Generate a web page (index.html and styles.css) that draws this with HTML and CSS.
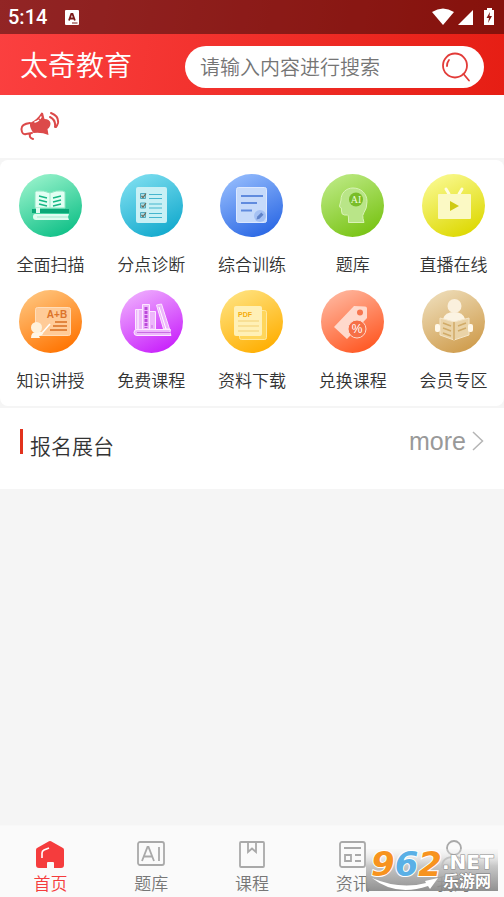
FILE: index.html
```html
<!DOCTYPE html>
<html lang="zh-CN">
<head>
    <meta charset="UTF-8">
    <meta name="viewport" content="width=device-width, initial-scale=1.0">
    <title>太奇教育</title>
    <link rel="stylesheet" href="styles.css">
</head>
<body>
    <div class="top">
        <div class="status">
            <span class="time">5:14</span>
            <svg class="status-app" width="14" height="15" viewBox="0 0 14 15">
                <rect width="14" height="15" rx="1" fill="#fff"/>
                <path d="M4 10.500 6.300 4h1.200l2.400 6.500M5 8.500h4" fill="none" stroke="#7b1a1a" stroke-width="1.800"/>
                <path d="M7 13h5.500" stroke="#7b1a1a"/>
            </svg>
            <svg class="status-icons" width="64" height="20" viewBox="0 0 64 20" fill="#fff">
                <path d="M0 5Q11-2 22 5L11 18z"/>
                <path d="M41 3v15H26z"/>
                <path d="M55 1h5v2h2v15h-10V3h3z"/>
                <path d="M58 5 54.500 11h2.500l-1 5 4-7h-2.500z" fill="#7d1611"/>
            </svg>
        </div>
        <header class="header">
            <h1>太奇教育</h1>
            <form class="search">
                <input type="search" placeholder="请输入内容进行搜索" aria-label="搜索">
                <button type="submit" aria-label="搜索">
                    <svg width="30" height="30" viewBox="0 0 30 30" fill="none" stroke="#e23b38" stroke-width="1.800" stroke-linecap="round">
                        <circle cx="14" cy="13.500" r="12"/>
                        <path d="M22.500 22 28 28.500M6 14q0-3.500 2-6"/>
                    </svg>
                </button>
            </form>
        </header>
    </div>

    <main>
        <div class="notice">
            <svg width="40" height="30" viewBox="0 0 40 30" fill="none" stroke="#dc4a4a" stroke-width="2" stroke-linecap="round">
                <path d="M10 12Q17 9 21.500 1.500l1.500.500 1.500 6q5 0 6 4 0 4-3 6l1 6q-7-3-15-2-4-5-3.500-10z" fill="#dc4a4a" stroke="none"/>
                <path d="M10 12Q1 13 1.500 18.500T6 23l6-1M10 23q-1 4 3 5"/>
                <path d="M15 11q4-1 6-5" stroke="#fff" stroke-width="1.500" stroke-dasharray="4 2.500"/>
                <path d="M30 6q6 3 5 10M31 2q8 3 7 10-1 3-2 4"/>
            </svg>
        </div>

        <nav class="menu">
            <a href="#">
                <svg class="circle" viewBox="0 0 63 63">
                    <defs><linearGradient id="g1" x1="0.200" y1="0" x2="0.700" y2="1"><stop stop-color="#9af3cc"/><stop offset="1" stop-color="#0fc087"/></linearGradient></defs>
                    <circle cx="31.500" cy="31.500" r="31.500" fill="url(#g1)"/>
                    <path d="M17 17q8-1 14 2 6-3 13-2l2 1v16H16V18z" fill="#e2fff3" stroke="#8be5c2"/>
                    <path d="M20 22l8 2M20 26l8 2M20 30l8 2M34 24l8-2M34 28l8-2M34 32l8-2" stroke="#15b884" stroke-width="1.300"/>
                    <path d="M31 19v15" stroke="#a5e8cd"/>
                    <path d="M13 35h37v4H13z" fill="#0aa877"/>
                    <path d="M17 34h4v5h-4zM15 40h35l-1 3 1 3H17q-3 0-3-3t2-3z" fill="#dffcf0"/>
                    <path d="M18 43h31" stroke="#a0e9cc"/>
                </svg>
                <span>全面扫描</span>
            </a>
            <a href="#">
                <svg class="circle" viewBox="0 0 63 63">
                    <defs><linearGradient id="g2" x1="0.200" y1="0" x2="0.700" y2="1"><stop stop-color="#7fdff0"/><stop offset="1" stop-color="#12a9cd"/></linearGradient></defs>
                    <circle cx="31.500" cy="31.500" r="31.500" fill="url(#g2)"/>
                    <rect x="16" y="13" width="31" height="36" rx="2" fill="#c8f0f5"/>
                    <path d="M20.500 19.500h5v5h-5zM20.500 29h5v5h-5zM20.500 38.500h5v5h-5z" fill="#a9dce3" stroke="#4ea9bd"/>
                    <path d="m21.500 22 1.500 1.500 3-4M21.500 31.500 23 33l3-4M21.500 41l1.500 1.500 3-4" fill="none" stroke="#6d6a58" stroke-width="1.200"/>
                    <path d="M29 20.500h13M29 24.500h13M29 30h13M29 34h13M29 39.500h13M29 43.500h13" stroke="#45b5ce" stroke-width="1.200"/>
                </svg>
                <span>分点诊断</span>
            </a>
            <a href="#">
                <svg class="circle" viewBox="0 0 63 63">
                    <defs><linearGradient id="g3" x1="0.200" y1="0" x2="0.700" y2="1"><stop stop-color="#96bdfd"/><stop offset="1" stop-color="#2a67e4"/></linearGradient></defs>
                    <circle cx="31.500" cy="31.500" r="31.500" fill="url(#g3)"/>
                    <rect x="16.500" y="13.500" width="30" height="35" rx="2" fill="#c6dafa" stroke="#dce8ff"/>
                    <path d="M21 22h22M21 29h16M21 36.500h11" stroke="#608bde" stroke-width="2"/>
                    <circle cx="40" cy="42" r="6" fill="#a5c1f3"/>
                    <path d="m36.500 45.500.800-3 4-4 2.200 2.200-4 4z" fill="#5f82c8"/>
                </svg>
                <span>综合训练</span>
            </a>
            <a href="#">
                <svg class="circle" viewBox="0 0 63 63">
                    <defs><linearGradient id="g4" x1="0.200" y1="0" x2="0.700" y2="1"><stop stop-color="#bdea85"/><stop offset="1" stop-color="#78c313"/></linearGradient></defs>
                    <circle cx="31.500" cy="31.500" r="31.500" fill="url(#g4)"/>
                    <path d="M32 14c-7 0-12 5-12 12l-1.500 6q0 2 2 2v3q0 4 3 4h3q1 0 1 3v4.500h15.500l-1-4q-1-3 1-6 3-4 3-11c0-8-6-13.500-14-13.500z" fill="#b9e588" stroke="#d9f3b6"/>
                    <circle cx="35" cy="25.500" r="7" fill="#79bd28"/>
                    <text x="35" y="28.500" class="ai-text">AI</text>
                </svg>
                <span>题库</span>
            </a>
            <a href="#">
                <svg class="circle" viewBox="0 0 63 63">
                    <defs><linearGradient id="g5" x1="0.200" y1="0" x2="0.700" y2="1"><stop stop-color="#fafa92"/><stop offset="1" stop-color="#ddd800"/></linearGradient></defs>
                    <circle cx="31.500" cy="31.500" r="31.500" fill="url(#g5)"/>
                    <path d="m24 15 3 5M40 15l-3 5" stroke="#fffde2" stroke-width="3" stroke-linecap="round"/>
                    <rect x="16" y="20" width="33" height="25" rx="1" fill="#fbf9c4"/>
                    <path d="m28 27 9 5-9 5z" fill="#cfca13"/>
                </svg>
                <span>直播在线</span>
            </a>
            <a href="#">
                <svg class="circle" viewBox="0 0 63 63">
                    <defs><linearGradient id="g6" x1="0.200" y1="0" x2="0.700" y2="1"><stop stop-color="#ffc67f"/><stop offset="1" stop-color="#ff7300"/></linearGradient></defs>
                    <circle cx="31.500" cy="31.500" r="31.500" fill="url(#g6)"/>
                    <rect x="16.500" y="17.500" width="35" height="28" rx="2" fill="#ffcb98" stroke="#ffddba"/>
                    <text x="38" y="28" class="ab-text">A+B</text>
                    <path d="M36 32h12M34 36h14M31 40h17" stroke="#d96f20" stroke-width="1.500"/>
                    <path d="m23 43 8-9" stroke="#fff" stroke-width="1.500"/>
                    <path d="M12 48q0-6 5-6h7q1 3-4 4l1 2z" fill="#fff6e6"/>
                    <circle cx="17.500" cy="37.500" r="5.500" fill="#fff1da"/>
                </svg>
                <span>知识讲授</span>
            </a>
            <a href="#">
                <svg class="circle" viewBox="0 0 63 63">
                    <defs><linearGradient id="g7" x1="0.200" y1="0" x2="0.700" y2="1"><stop stop-color="#efaffe"/><stop offset="1" stop-color="#c820fb"/></linearGradient></defs>
                    <circle cx="31.500" cy="31.500" r="31.500" fill="url(#g7)"/>
                    <g fill="#edb6fb" stroke="#fce8ff">
                        <path d="M15.500 19.500h7v20h-7zM22.500 14.500h7v25h-7zM29.500 21.500h6v18h-6zM36.500 15l5-1 8 25h-6z"/>
                        <path d="M50.500 39.500H17q-3 0-3 3t3 3h34q-2-3-.500-6z"/>
                    </g>
                    <path d="M26 17v21" stroke="#bb49da" stroke-width="3" stroke-dasharray="3 1"/>
                    <path d="M32 35v3M17 42.500h33" stroke="#c96ce3"/>
                    <path d="m39 17 7 22M18 20v19" stroke="#fff"/>
                </svg>
                <span>免费课程</span>
            </a>
            <a href="#">
                <svg class="circle" viewBox="0 0 63 63">
                    <defs><linearGradient id="g8" x1="0.200" y1="0" x2="0.700" y2="1"><stop stop-color="#ffe381"/><stop offset="1" stop-color="#ffae00"/></linearGradient></defs>
                    <circle cx="31.500" cy="31.500" r="31.500" fill="url(#g8)"/>
                    <rect x="19.500" y="20.500" width="27" height="29" rx="2" fill="#ffd65b" stroke="#ffe89e"/>
                    <rect x="14" y="16" width="28" height="30" rx="2" fill="#fff0b6"/>
                    <text x="18" y="27" class="pdf-text">PDF</text>
                    <path d="M18 31h21M18 36h21M18 41h21" stroke="#f2cf72"/>
                </svg>
                <span>资料下载</span>
            </a>
            <a href="#">
                <svg class="circle" viewBox="0 0 63 63">
                    <defs><linearGradient id="g9" x1="0.200" y1="0" x2="0.700" y2="1"><stop stop-color="#ffb8a0"/><stop offset="1" stop-color="#ff5722"/></linearGradient></defs>
                    <circle cx="31.500" cy="31.500" r="31.500" fill="url(#g9)"/>
                    <path d="m33 16 11 .500q2 0 2 2V28L26 49 13 37z" fill="#ffd9cc"/>
                    <circle cx="39" cy="22.500" r="3" fill="#f77650"/>
                    <circle cx="36" cy="39" r="9" fill="#f66f46" stroke="#ffd9cc"/>
                    <text x="36" y="43" class="percent-text">%</text>
                </svg>
                <span>兑换课程</span>
            </a>
            <a href="#">
                <svg class="circle" viewBox="0 0 63 63">
                    <defs><linearGradient id="g10" x1="0.200" y1="0" x2="0.700" y2="1"><stop stop-color="#eeddb9"/><stop offset="1" stop-color="#cf9c4c"/></linearGradient></defs>
                    <circle cx="31.500" cy="31.500" r="31.500" fill="url(#g10)"/>
                    <path d="M21 29q2-7 11-7t11 7l-11 3z" fill="#fbf3e2"/>
                    <circle cx="32.500" cy="16" r="7" fill="#faf0dd"/>
                    <path d="m18 28 14 4 15-4v17l-15 5-14-5z" fill="#ead3a7" stroke="#f5e6c9"/>
                    <path d="M32 32v18M21 33l8 3M21 38l8 3M36 36l8-3M36 41l8-3M21 43l8 3" stroke="#d1ab68" stroke-width="1.500"/>
                    <rect x="13" y="34" width="5" height="8" rx="2" fill="#fff8e9"/>
                    <rect x="46" y="34" width="5" height="8" rx="2" fill="#fff8e9"/>
                </svg>
                <span>会员专区</span>
            </a>
        </nav>

        <section class="booth">
            <h2>报名展台</h2>
            <a class="more" href="#">more
                <svg width="12" height="20" viewBox="0 0 12 20" fill="none" stroke="#b5b5b5" stroke-width="1.500"><path d="m1 1 9.500 9L1 19"/></svg>
            </a>
        </section>
    </main>

    <footer class="tabbar">
        <a class="active" href="#">
            <svg class="tab-icon" viewBox="0 0 32 32">
                <path d="M15 3.300q1-.600 2 0l12 6.700q1 .600 1 2v15q0 3-3 3h-7v-5q0-1-1-1h-5q-1 0-1 1v5H5q-3 0-3-3V12q0-1.400 1-2z" fill="#f53c3d"/>
                <path d="M8 20v-5q0-2 2-3l5-2" fill="none" stroke="#fff" stroke-width="1.600"/>
            </svg>
            <span>首页</span>
        </a>
        <a href="#">
            <svg class="tab-icon" viewBox="0 0 32 32" fill="none" stroke="#a9a9a9" stroke-width="1.800">
                <rect x="3" y="4" width="26" height="23" rx="2"/>
                <path d="M7 23 12.500 9h1L19 23M9 18.500h8M24 9v14"/>
            </svg>
            <span>题库</span>
        </a>
        <a href="#">
            <svg class="tab-icon" viewBox="0 0 32 32" fill="none" stroke="#a9a9a9" stroke-width="1.800">
                <rect x="4" y="4" width="24" height="25" rx="1"/>
                <path d="M12 4v10l4-3.500 4 3.500V4"/>
            </svg>
            <span>课程</span>
        </a>
        <a href="#">
            <svg class="tab-icon" viewBox="0 0 32 32" fill="none" stroke="#a9a9a9" stroke-width="1.800">
                <rect x="3" y="4" width="25" height="25" rx="2"/>
                <path d="M7 10h17M8 17h6v6H8zM18 17h6M18 23h6"/>
            </svg>
            <span>资讯</span>
        </a>
        <a href="#">
            <svg class="tab-icon" viewBox="0 0 32 32" fill="none" stroke="#a9a9a9" stroke-width="1.800">
                <circle cx="16" cy="10" r="7"/>
                <path d="M4 29q0-10 12-10t12 10z"/>
            </svg>
            <span>我的</span>
        </a>
        <svg class="watermark" width="132" height="42" viewBox="0 0 132 42">
            <defs>
                <linearGradient id="wm" x1="0" y1="0" x2="0" y2="1"><stop stop-color="#ededed" stop-opacity="0.200"/><stop offset="0.400" stop-color="#c2c2c2" stop-opacity="0.900"/><stop offset="1" stop-color="#858585" stop-opacity="0.900"/></linearGradient>
            </defs>
            <rect width="132" height="42" fill="url(#wm)"/>
            <text x="5" y="27" class="wm-num"><tspan fill="#f7931e">9</tspan><tspan fill="#5ab0e6">6</tspan><tspan fill="#f7931e">2</tspan></text>
            <path d="M6 29Q30 48 62 37l2 3 8-11-13 3 1 2Q34 41 6 29z" fill="#fff"/>
            <text x="76" y="20" class="wm-net">.NET</text>
            <text x="77" y="38" class="wm-cn">乐游网</text>
        </svg>
    </footer>
</body>
</html>
```
FILE: styles.css
```css
* {
    margin: 0;
    padding: 0;
    box-sizing: border-box;
}

body {
    display: flex;
    flex-direction: column;
    min-height: 100vh;
    background-color: #f5f5f5;
    color: #333;
    font-family: "Noto Sans CJK SC", sans-serif;
    font-weight: 350;
}

a {
    color: inherit;
    text-decoration: none;
}

svg {
    display: block;
}

.top {
    background: linear-gradient(100deg, #fb4040, #e61e14);
}

.status {
    display: flex;
    align-items: center;
    height: 34px;
    padding: 0 8px;
    background-color: rgba(0, 0, 0, 0.42);
    color: #fff;
}

.time {
    font: 500 20px/34px Roboto, sans-serif;
}

.status-app {
    margin-left: 18px;
}

.status-icons {
    margin-left: auto;
}

.header {
    display: flex;
    align-items: center;
    gap: 53px;
    padding: 12px 20px 7px;
}

h1 {
    color: #fff;
    font-size: 28px;
    font-weight: 350;
    line-height: 34px;
    padding-bottom: 6px;
}

.search {
    flex: 1;
    display: flex;
    align-items: center;
    min-width: 0;
    height: 42px;
    padding: 0 13px 0 15px;
    border-radius: 21px;
    background-color: #fff;
}

.search input {
    flex: 1;
    min-width: 0;
    border: none;
    outline: none;
    background: none;
    font: 350 20px/30px "Noto Sans CJK SC", sans-serif;
}

.search input::placeholder {
    color: #757575;
}

.search button {
    border: none;
    background: none;
    cursor: pointer;
}

.notice {
    height: 63px;
    padding: 16px 20px;
    background-color: #fff;
}

.menu {
    display: grid;
    grid-template-columns: repeat(5, 1fr);
    row-gap: 14px;
    margin: 2px 0;
    padding: 14px 0;
    border-radius: 8px;
    background-color: #fff;
}

.menu a {
    display: flex;
    flex-direction: column;
    align-items: center;
    gap: 15px;
    font-size: 17px;
    line-height: 24px;
}

.circle {
    width: 63px;
    height: 63px;
}

.ai-text {
    font: 10px "Liberation Serif", serif;
    fill: #edffd9;
    text-anchor: middle;
}

.ab-text {
    font: bold 10px "Liberation Sans", sans-serif;
    fill: #dc742a;
    text-anchor: middle;
}

.pdf-text {
    font: bold 7px "Liberation Sans", sans-serif;
    fill: #f5ad0e;
}

.percent-text {
    font: 12px "Liberation Sans", sans-serif;
    fill: #fff;
    text-anchor: middle;
}

.booth {
    display: flex;
    align-items: flex-start;
    justify-content: space-between;
    padding: 21px 20px 35px;
    background-color: #fff;
}

h2 {
    height: 25px;
    padding-left: 7px;
    border-left: 3px solid #e2321d;
    font-size: 21px;
    font-weight: 350;
    line-height: 32px;
}

.more {
    display: flex;
    align-items: center;
    gap: 6px;
    color: #999;
    font: 25px/24px "Liberation Sans", sans-serif;
}

.tabbar {
    position: relative;
    display: flex;
    margin-top: auto;
    padding: 12px 0 1px;
    border-top: 1px solid #f8f8f8;
    background-color: #fafafa;
}

.tabbar a {
    flex: 1;
    display: flex;
    flex-direction: column;
    align-items: center;
    color: #777;
    font-size: 17px;
    line-height: 26px;
}

.tabbar .active {
    color: #f53c3d;
}

.tab-icon {
    width: 32px;
    height: 32px;
}

.watermark {
    position: absolute;
    right: 6px;
    bottom: 6px;
    overflow: visible;
}

.wm-num {
    font: italic bold 34px "DejaVu Sans", sans-serif;
    stroke: #fff;
    stroke-width: 2px;
    paint-order: stroke;
}

.wm-net {
    font: bold 20px "DejaVu Sans", sans-serif;
    fill: #fff;
    stroke: #888;
    stroke-width: 1px;
    paint-order: stroke;
}

.wm-cn {
    font: bold 16px "Noto Sans CJK SC", sans-serif;
    fill: #fff;
    stroke: #777;
    stroke-width: 1px;
    paint-order: stroke;
}
```
